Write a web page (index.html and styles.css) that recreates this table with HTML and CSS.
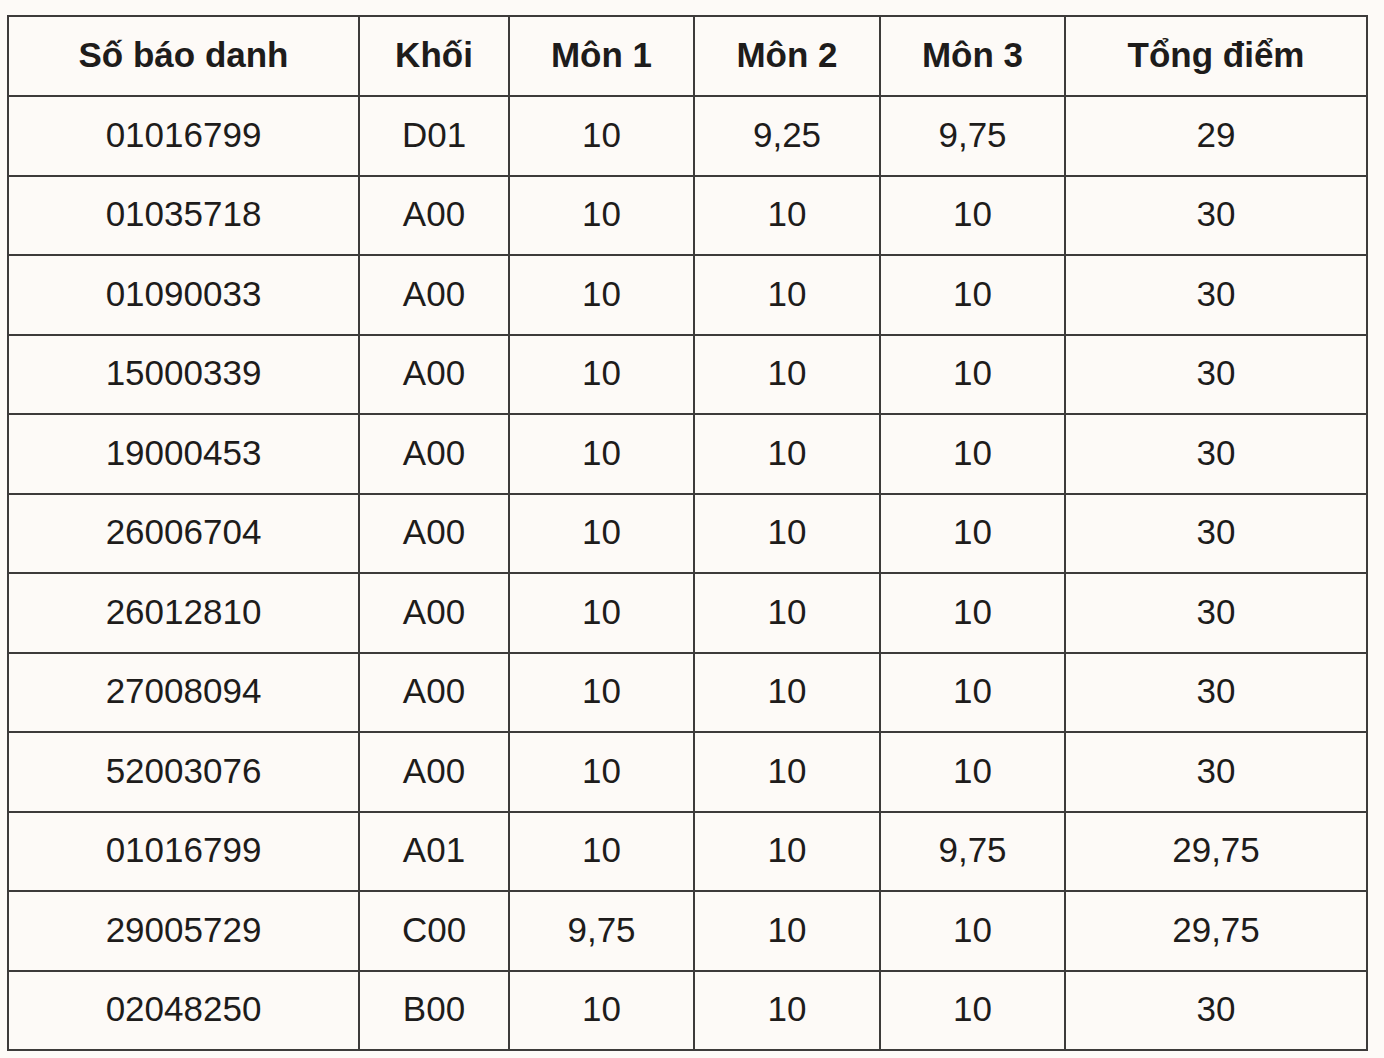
FILE: index.html
```html
<!DOCTYPE html>
<html lang="vi">
<head>
<meta charset="utf-8">
<title>Bảng điểm</title>
<link rel="stylesheet" href="styles.css">
</head>
<body>
<table class="scores">
  <colgroup>
    <col class="c1"><col class="c2"><col class="c3"><col class="c4"><col class="c5"><col class="c6">
  </colgroup>
  <thead>
    <tr><th>Số báo danh</th><th>Khối</th><th>Môn 1</th><th>Môn 2</th><th>Môn 3</th><th>Tổng điểm</th></tr>
  </thead>
  <tbody>
    <tr><td>01016799</td><td>D01</td><td>10</td><td>9,25</td><td>9,75</td><td>29</td></tr>
    <tr><td>01035718</td><td>A00</td><td>10</td><td>10</td><td>10</td><td>30</td></tr>
    <tr><td>01090033</td><td>A00</td><td>10</td><td>10</td><td>10</td><td>30</td></tr>
    <tr><td>15000339</td><td>A00</td><td>10</td><td>10</td><td>10</td><td>30</td></tr>
    <tr><td>19000453</td><td>A00</td><td>10</td><td>10</td><td>10</td><td>30</td></tr>
    <tr><td>26006704</td><td>A00</td><td>10</td><td>10</td><td>10</td><td>30</td></tr>
    <tr><td>26012810</td><td>A00</td><td>10</td><td>10</td><td>10</td><td>30</td></tr>
    <tr><td>27008094</td><td>A00</td><td>10</td><td>10</td><td>10</td><td>30</td></tr>
    <tr><td>52003076</td><td>A00</td><td>10</td><td>10</td><td>10</td><td>30</td></tr>
    <tr><td>01016799</td><td>A01</td><td>10</td><td>10</td><td>9,75</td><td>29,75</td></tr>
    <tr><td>29005729</td><td>C00</td><td>9,75</td><td>10</td><td>10</td><td>29,75</td></tr>
    <tr><td>02048250</td><td>B00</td><td>10</td><td>10</td><td>10</td><td>30</td></tr>
  </tbody>
</table>
</body>
</html>
```

FILE: styles.css
```css
html, body {
  margin: 0;
  background: #fdfaf7;
}
body {
  padding: 15px 0 0 7px;
  font-family: "Liberation Sans", Arial, Helvetica, sans-serif;
  color: #1e1c1b;
}
.scores {
  border-collapse: collapse;
  table-layout: fixed;
  width: 1359px;
}
.c1 { width: 351px; }
.c2 { width: 150px; }
.c3 { width: 185px; }
.c4 { width: 186px; }
.c5 { width: 185px; }
.c6 { width: 302px; }
.scores th,
.scores td {
  border: 2px solid #3d3b3a;
  text-align: center;
  vertical-align: middle;
  padding: 0 0 3px 0;
  font-size: 35px;
  line-height: 1;
}
.scores th {
  font-weight: bold;
  height: 75px;
}
.scores td {
  font-weight: normal;
  height: 74.5px;
}
```
